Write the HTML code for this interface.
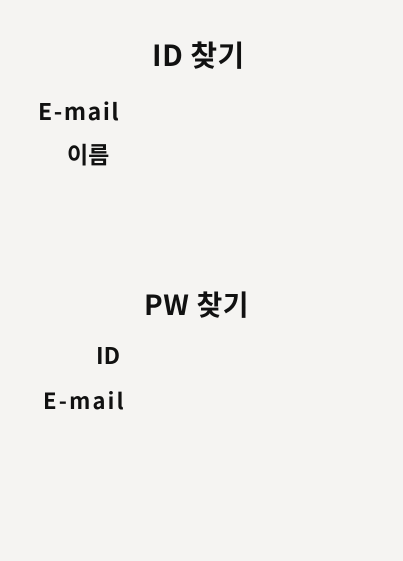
<!DOCTYPE html>
<html><head><meta charset="utf-8"><style>
html,body{margin:0;padding:0;}
body{width:403px;height:561px;background:#f5f4f2;position:relative;overflow:hidden;
font-family:"Liberation Sans","Noto Sans CJK KR",sans-serif;color:#111;}
div{position:absolute;line-height:1;font-weight:bold;white-space:nowrap;font-family:"Noto Sans CJK KR","Liberation Sans",sans-serif;}
</style></head><body>
<div style="left:152px;top:40px;font-size:29px;letter-spacing:0.5px;">ID 찾기</div>
<div style="left:38px;top:99px;font-size:23px;letter-spacing:1.6px;">E-mail</div>
<div style="left:67px;top:142px;font-size:23px;">이름</div>
<div style="left:144px;top:290px;font-size:28px;letter-spacing:0.6px;">PW 찾기</div>
<div style="left:96px;top:343px;font-size:23px;">ID</div>
<div style="left:43px;top:389px;font-size:22px;letter-spacing:2.2px;">E-mail</div>
</body></html>
